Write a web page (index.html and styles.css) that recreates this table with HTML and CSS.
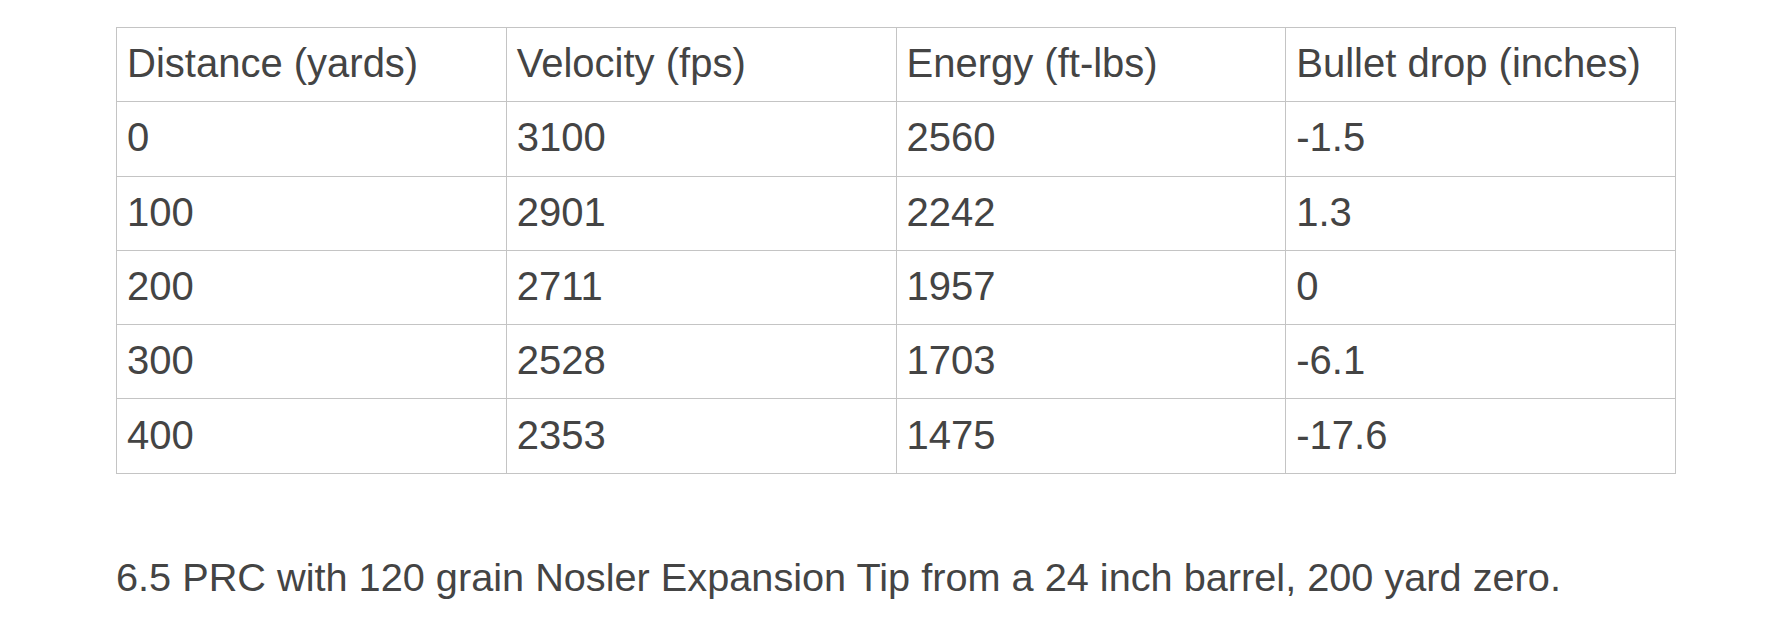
FILE: index.html
```html
<!DOCTYPE html>
<html lang="en">
<head>
    <meta charset="UTF-8">
    <meta name="viewport" content="width=device-width, initial-scale=1.0">
    <title>6.5 PRC Ballistics</title>
    <link rel="stylesheet" href="styles.css">
</head>
<body>
    <div class="container">
        <table class="ballistics">
            <thead>
                <tr>
                    <th>Distance (yards)</th>
                    <th>Velocity (fps)</th>
                    <th>Energy (ft-lbs)</th>
                    <th>Bullet drop (inches)</th>
                </tr>
            </thead>
            <tbody>
                <tr><td>0</td><td>3100</td><td>2560</td><td>-1.5</td></tr>
                <tr><td>100</td><td>2901</td><td>2242</td><td>1.3</td></tr>
                <tr><td>200</td><td>2711</td><td>1957</td><td>0</td></tr>
                <tr><td>300</td><td>2528</td><td>1703</td><td>-6.1</td></tr>
                <tr><td>400</td><td>2353</td><td>1475</td><td>-17.6</td></tr>
            </tbody>
        </table>

        <p class="caption">6.5 PRC with 120 grain Nosler Expansion Tip from a 24 inch barrel, 200 yard zero.</p>
    </div>
</body>
</html>
```

FILE: styles.css
```css
* {
    margin: 0;
    padding: 0;
    box-sizing: border-box;
}

body {
    background: #ffffff;
    color: #444444;
    font-family: "Liberation Sans", Arial, sans-serif;
}

.container {
    padding: 27px 116px 0;
}

.ballistics {
    width: 100%;
    border-collapse: collapse;
    table-layout: fixed;
}

.ballistics th,
.ballistics td {
    border: 1px solid #c4c4c4;
    height: 74.3px;
    padding: 0 10px 2px;
    text-align: left;
    font-size: 40px;
    font-weight: normal;
    vertical-align: middle;
}

.caption {
    margin-top: 81px;
    font-size: 39.7px;
}
```
